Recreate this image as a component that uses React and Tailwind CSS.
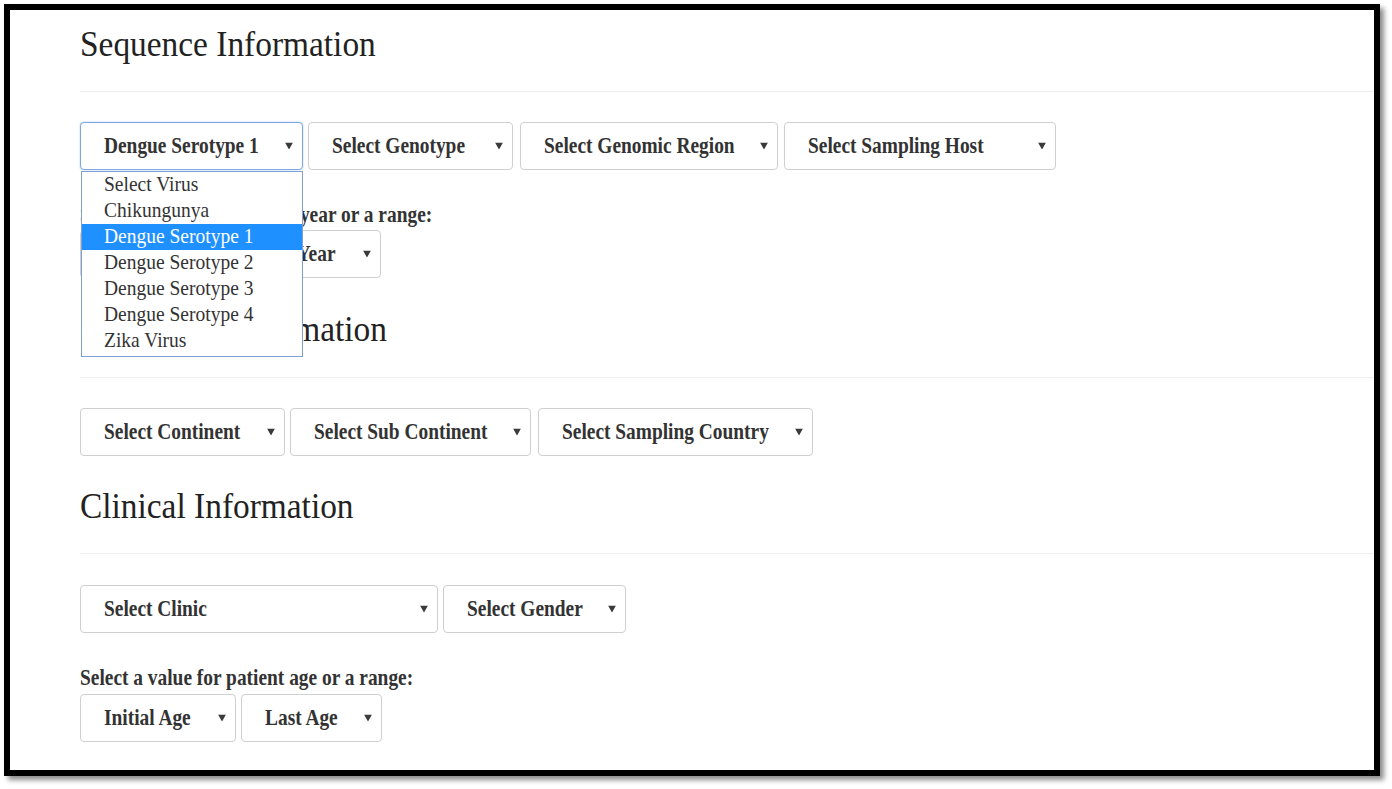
import { useState } from 'react';

const serif = { fontFamily: '"Liberation Serif", "Times New Roman", serif' };

const viruses = [
    'Select Virus',
    'Chikungunya',
    'Dengue Serotype 1',
    'Dengue Serotype 2',
    'Dengue Serotype 3',
    'Dengue Serotype 4',
    'Zika Virus',
];

function Arrow() {
    return (
        <svg className="absolute right-[9px] top-1/2 -translate-y-1/2" width="8" height="7" viewBox="0 0 8 7">
            <path d="M0 0 L8 0 L4 7 Z" fill="#3a3a3a" />
        </svg>
    );
}

function Select({ label, className = '', focused = false }) {
    return (
        <div className={`relative flex items-center h-[48px] shrink-0 rounded-[4px] bg-white pl-[23px] border ${focused ? 'border-[#7fa6e3] shadow-[0_0_2px_rgba(102,175,233,0.6)]' : 'border-[#cfcfcf]'} ${className}`}>
            <span className="inline-block scale-y-[1.15] text-[19.4px] font-bold text-[#333] whitespace-nowrap">{label}</span>
            <Arrow />
        </div>
    );
}

function Heading({ children, className = '' }) {
    return (
        <h2 className={`text-[33.4px] leading-[34px] text-[#222] ${className}`}>
            <span className="inline-block scale-y-[1.1]">{children}</span>
        </h2>
    );
}

function Rule({ className = '' }) {
    return <div className={`border-t border-[#eeeeee] ${className}`} />;
}

function Label({ children, className = '' }) {
    return (
        <p className={`text-[19.4px] leading-[20px] font-bold text-[#333] ${className}`}>
            <span className="inline-block scale-y-[1.15]">{children}</span>
        </p>
    );
}

export default function App() {
    const [virus] = useState('Dengue Serotype 1');

    return (
        <div className="w-[1392px] h-[789px] bg-white overflow-hidden" style={serif}>
            <div className="ml-[4px] mt-[4px] w-[1376px] h-[772px] border-[6px] border-black shadow-[4px_4px_5px_rgba(0,0,0,0.45)] overflow-hidden">
                <div className="pl-[70px] pt-[17px]">
                    <Heading>Sequence Information</Heading>
                    <Rule className="mt-[30px]" />

                    <div className="flex mt-[30px]">
                        <div className="relative">
                            <Select label={virus} className="w-[223px]" focused />
                            <div className="absolute z-10 top-[49px] left-[1px] w-[222px] border border-[#7e9fd6] bg-white pb-[2px]">
                                {viruses.map(v => (
                                    <div key={v}
                                        className={`h-[26px] leading-[26px] pl-[22px] text-[19.5px] whitespace-nowrap ${v === virus ? 'bg-[#1e90ff] text-white' : 'text-[#333]'}`}>
                                        <span className="inline-block scale-y-[1.08]">{v}</span>
                                    </div>
                                ))}
                            </div>
                        </div>
                        <Select label="Select Genotype" className="w-[205px] ml-[5px]" />
                        <Select label="Select Genomic Region" className="w-[258px] ml-[7px]" />
                        <Select label="Select Sampling Host" className="w-[272px] ml-[6px]" />
                    </div>

                    <Label className="mt-[35px]">Select a value for sampled year or a range:</Label>
                    <div className="flex mt-[5px]">
                        <Select label="Initial Year" className="w-[147px]" />
                        <Select label="Last Year" className="w-[149px] ml-[5px]" />
                    </div>

                    <Heading className="mt-[34px]">Collection Information</Heading>
                    <Rule className="mt-[31px]" />
                    <div className="flex mt-[30px]">
                        <Select label="Select Continent" className="w-[205px]" />
                        <Select label="Select Sub Continent" className="w-[241px] ml-[5px]" />
                        <Select label="Select Sampling Country" className="w-[275px] ml-[7px]" />
                    </div>

                    <Heading className="mt-[33px]">Clinical Information</Heading>
                    <Rule className="mt-[30px]" />
                    <div className="flex mt-[31px]">
                        <Select label="Select Clinic" className="w-[358px]" />
                        <Select label="Select Gender" className="w-[183px] ml-[5px]" />
                    </div>

                    <Label className="mt-[35px]">Select a value for patient age or a range:</Label>
                    <div className="flex mt-[6px]">
                        <Select label="Initial Age" className="w-[156px]" />
                        <Select label="Last Age" className="w-[141px] ml-[5px]" />
                    </div>
                </div>
            </div>
        </div>
    );
}
